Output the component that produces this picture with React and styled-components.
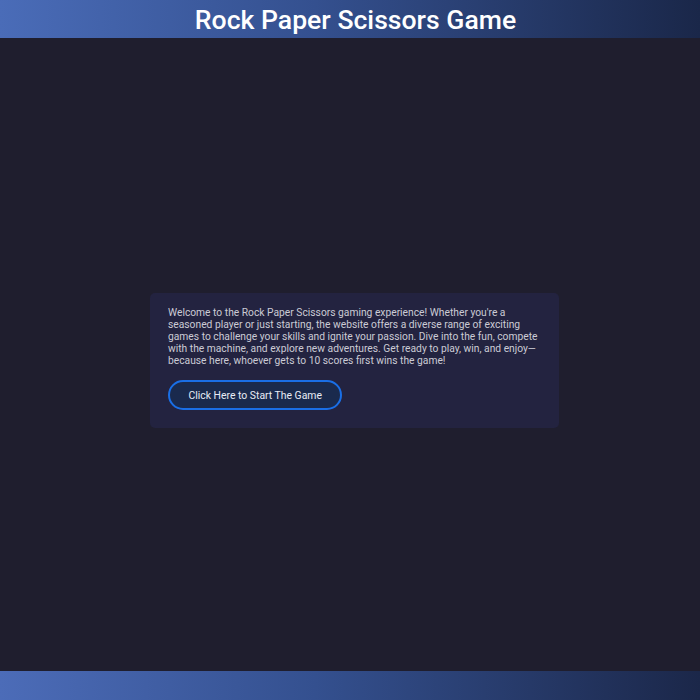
import React from "react";
import styled, { createGlobalStyle } from "styled-components";

const GlobalStyle = createGlobalStyle`
  * {
    box-sizing: border-box;
  }
  body {
    margin: 0;
    background-color: #1f1e2e;
    font-family: Roboto, "Liberation Sans", sans-serif;
  }
`;

const Page = styled.div`
  display: flex;
  flex-direction: column;
  height: 100vh;
`;

const Header = styled.header`
  height: 38px;
  display: flex;
  align-items: center;
  justify-content: center;
  padding-left: 11px;
  background: linear-gradient(90deg, #4a6cb8 0%, #34508f 45%, #1a2749 100%);
  h1 {
    margin: 0;
    color: #ffffff;
    font-size: 26.6px;
    font-weight: 500;
  }
`;

const Main = styled.main`
  flex: 1;
  display: flex;
  align-items: center;
  justify-content: center;
  padding: 12px 0 0 9px;
`;

const Card = styled.section`
  width: 409px;
  padding: 14px 18px 18px;
  background-color: #232340;
  border-radius: 5px;
  p {
    margin: 0 0 13px;
    color: #cbcbd5;
    font-size: 10.28px;
    line-height: 12px;
  }
`;

const StartButton = styled.button`
  height: 30px;
  padding: 0 18.5px;
  background-color: #1a2a4d;
  color: #e8ecf5;
  font-family: inherit;
  font-size: 10.4px;
  border: 2px solid #1a6fe6;
  border-radius: 16px;
  cursor: pointer;
`;

const Footer = styled.footer`
  height: 29px;
  background: linear-gradient(90deg, #4c6cb8 0%, #34508f 45%, #1b2749 100%);
`;

const App = () => {
  return (
    <Page>
      <GlobalStyle />
      <Header>
        <h1>Rock Paper Scissors Game</h1>
      </Header>

      {/* intro card */}
      <Main>
        <Card>
          <p>
            Welcome to the Rock Paper Scissors gaming experience! Whether you're a
            seasoned player or just starting, the website offers a diverse range of
            exciting games to challenge your skills and ignite your passion. Dive into
            the fun, compete with the machine, and explore new adventures. Get ready to
            play, win, and enjoy—because here, whoever gets to 10 scores first wins the
            game!
          </p>
          <StartButton>Click Here to Start The Game</StartButton>
        </Card>
      </Main>

      <Footer />
    </Page>
  );
};

export default App;
